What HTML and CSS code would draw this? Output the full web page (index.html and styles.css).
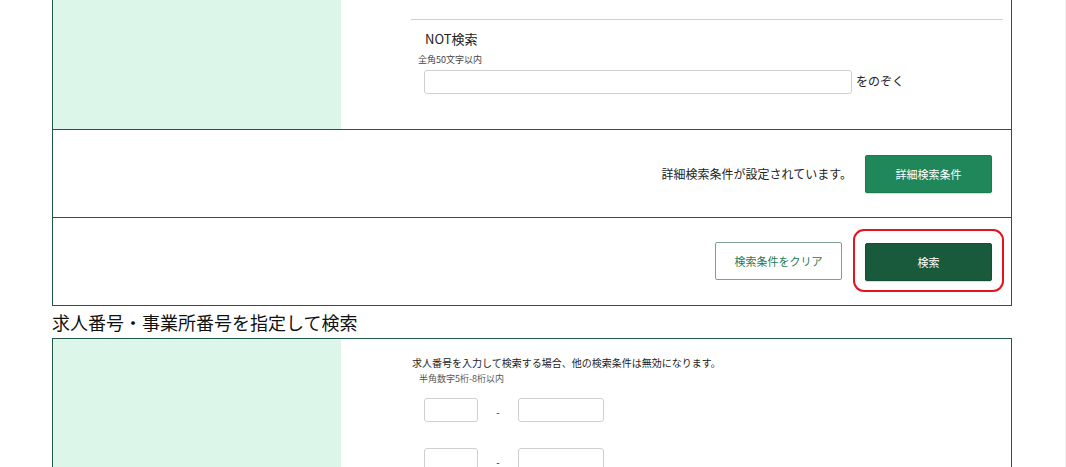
FILE: index.html
```html
<!DOCTYPE html>
<html lang="ja">
<head>
<meta charset="utf-8">
<link rel="stylesheet" href="styles.css">
</head>
<body>
<div class="page">
  <div class="box box-top">
    <div class="row split">
      <div class="side"></div>
      <div class="main">
        <div class="rule"></div>
        <div class="not-block">
          <div class="label">NOT検索</div>
          <div class="hint">全角50文字以内</div>
          <div class="input-line">
            <input class="text-input wide" type="text">
            <span class="suffix">をのぞく</span>
          </div>
        </div>
      </div>
    </div>
    <div class="row actions">
      <span class="status">詳細検索条件が設定されています。</span>
      <button class="btn btn-mid">詳細検索条件</button>
    </div>
    <div class="row actions">
      <button class="btn btn-outline">検索条件をクリア</button>
      <div class="search-wrap">
        <button class="btn btn-dark">検索</button>
        <span class="highlight"></span>
      </div>
    </div>
  </div>

  <h2 class="heading">求人番号・事業所番号を指定して検索</h2>

  <div class="box box-bottom">
    <div class="row split tall">
      <div class="side"></div>
      <div class="main main2">
        <div class="note">求人番号を入力して検索する場合、他の検索条件は無効になります。</div>
        <div class="hint hint2">半角数字5桁-8桁以内</div>
        <div class="num-row">
          <input class="text-input short" type="text">
          <span class="dash">-</span>
          <input class="text-input mid" type="text">
        </div>
        <div class="num-row">
          <input class="text-input short" type="text">
          <span class="dash">-</span>
          <input class="text-input mid" type="text">
        </div>
      </div>
    </div>
  </div>
</div>
<div class="scroll-edge"></div>
</body>
</html>
```

FILE: styles.css
```css
html, body {
  margin: 0;
  padding: 0;
  background: #ffffff;
  font-family: "Noto Sans CJK JP", "Noto Sans", sans-serif;
  color: #222;
  overflow: hidden;
}
.page {
  margin-left: 52px;
  width: 960px;
}
.box {
  border: 1px solid #22574a;
}
.box-top {
  border-top: none;
}
.row {
  display: flex;
}
.row + .row {
  border-top: 1px solid #22574a;
}
.split {
  height: 129px;
}
.side {
  width: 288px;
  background: #dcf7ea;
  flex: none;
}
.main {
  flex: 1;
  padding-top: 19px;
}
.rule {
  height: 1px;
  background: #cfcfcf;
  margin-left: 70px;
  margin-right: 8px;
}
.not-block {
  padding-left: 77px;
}
.label {
  font-size: 13px;
  line-height: 18px;
  margin-top: 10px;
  margin-left: 7px;
  color: #222;
}
.hint {
  font-size: 9px;
  line-height: 12px;
  margin-top: 6px;
  color: #444;
}
.input-line {
  display: flex;
  align-items: center;
  margin-top: 4px;
  margin-left: 6px;
}
.text-input {
  box-sizing: border-box;
  height: 24px;
  border: 1px solid #cfcfcf;
  border-radius: 3px;
  background: #fff;
  margin: 0;
  padding: 0 4px;
}
.wide {
  width: 428px;
}
.suffix {
  font-size: 12px;
  margin-left: 4px;
  margin-top: -4px;
}
.actions {
  height: 87px;
  align-items: center;
  justify-content: flex-end;
  padding-right: 19px;
}
.status {
  font-size: 12px;
  margin-right: 13px;
}
.btn {
  box-sizing: border-box;
  width: 127px;
  height: 38px;
  font-family: inherit;
  font-size: 11px;
  border-radius: 2px;
  margin: 0;
  cursor: pointer;
}
.btn-mid {
  background: #1f875a;
  color: #fff;
  border: 1px solid #1a7a50;
  box-shadow: 0 1px 1px rgba(0,0,0,0.15);
}
.btn-outline {
  background: #fff;
  color: #2a7a55;
  border: 1px solid #7f9f93;
  margin-right: 23px;
  margin-top: -1px;
}
.btn-dark {
  background: #195a3c;
  color: #fff;
  border: 1px solid #154f35;
  box-shadow: 0 1px 1px rgba(0,0,0,0.15);
}
.search-wrap {
  position: relative;
  display: flex;
  margin-top: 1px;
}
.highlight {
  position: absolute;
  left: -12px;
  top: -14px;
  width: 151px;
  height: 63px;
  box-sizing: border-box;
  border: 2px solid #e3141c;
  border-radius: 11px;
}
.heading {
  margin: 0;
  font-size: 18px;
  font-weight: normal;
  line-height: 32px;
  height: 32px;
  color: #111;
}
.box-bottom {
  border-bottom: none;
  height: 200px;
}
.tall {
  height: 200px;
}
.main2 {
  padding-top: 17px;
  padding-left: 71px;
}
.note {
  font-size: 10px;
  line-height: 14px;
  color: #222;
}
.hint2 {
  margin-top: 3px;
  margin-left: 7px;
  color: #555;
}
.num-row {
  display: flex;
  align-items: center;
  margin-left: 12px;
  margin-top: 13px;
}
.num-row + .num-row {
  margin-top: 26px;
}
.short {
  width: 54px;
}
.mid {
  width: 86px;
}
.dash {
  width: 40px;
  text-align: center;
  font-size: 10px;
  margin-top: 2px;
}
.scroll-edge {
  position: fixed;
  top: 0;
  right: 0;
  width: 1px;
  height: 100%;
  background: #eeeeee;
}
```
